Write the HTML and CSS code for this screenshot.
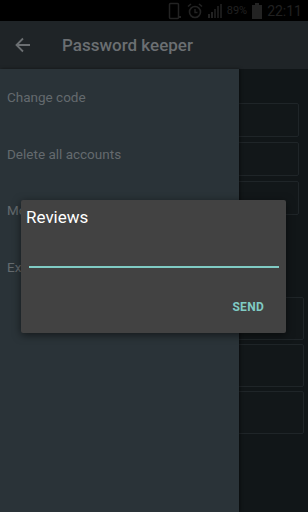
FILE: index.html
```html
<!DOCTYPE html>
<html lang="en">
  <head>
    <meta charset="UTF-8" />
    <meta name="viewport" content="width=device-width, initial-scale=1.0" />
    <title>Password keeper</title>
    <link rel="stylesheet" href="styles.css">
  </head>

  <body>
    <div class="screen">
      <div class="status-bar">
        <svg class="st-icon" width="14" height="18" viewBox="0 0 14 18">
          <rect x="1.5" y="1.5" width="9" height="15" rx="1" fill="none" stroke="#232323" stroke-width="1.5" />
          <rect x="11" y="14" width="2" height="2" fill="#232323" />
        </svg>
        <svg class="st-icon" width="16" height="16" viewBox="0 0 16 16">
          <circle cx="8" cy="9" r="5.5" fill="none" stroke="#232323" stroke-width="1.6" />
          <path d="M8 6v3.5h2.5" fill="none" stroke="#232323" stroke-width="1.4" />
          <path d="M1 3.5l3-2.5M15 3.5l-3-2.5" stroke="#232323" stroke-width="1.6" />
        </svg>
        <svg class="st-icon" width="14" height="14" viewBox="0 0 14 14">
          <rect x="0" y="10" width="2" height="4" fill="#232323" />
          <rect x="3" y="8" width="2" height="6" fill="#232323" />
          <rect x="6" y="5" width="2" height="9" fill="#1a1a1a" />
          <rect x="9" y="2" width="2" height="12" fill="#1a1a1a" />
          <rect x="12" y="0" width="2" height="14" fill="#1a1a1a" />
        </svg>
        <span class="st-text small">89%</span>
        <svg class="st-icon" width="10" height="16" viewBox="0 0 10 16">
          <rect x="3" y="0" width="4" height="2" fill="#232323" />
          <rect x="0" y="2" width="10" height="14" fill="#232323" />
        </svg>
        <span class="st-text">22:11</span>
      </div>

      <div class="toolbar">
        <svg class="back" width="16" height="16" viewBox="0 0 16 16">
          <path d="M15 8H2M8 1.5L1.5 8 8 14.5" fill="none" stroke="#6b6f72" stroke-width="1.8" />
        </svg>
        <span class="title">Password keeper</span>
      </div>

      <div class="main">
        <div class="cards top">
          <div class="card"></div>
          <div class="card"></div>
          <div class="card"></div>
        </div>
        <div class="cards bottom">
          <div class="card"></div>
          <div class="card"></div>
          <div class="card"></div>
        </div>

        <div class="drawer">
          <div class="drawer-item">Change code</div>
          <div class="drawer-item">Delete all accounts</div>
          <div class="drawer-item">More apps</div>
          <div class="drawer-item">Exit</div>
        </div>

        <div class="dialog">
          <div class="dialog-title">Reviews</div>
          <div class="dialog-input"></div>
          <div class="dialog-actions">
            <span class="send">SEND</span>
          </div>
        </div>
      </div>
    </div>
  </body>
</html>
```

FILE: styles.css
```css
body {
  margin: 0;
  background-color: #111618;
  font-family: Roboto, "Liberation Sans", sans-serif;
}

.screen {
  width: 308px;
  height: 512px;
  overflow: hidden;
  display: flex;
  flex-direction: column;
}

.status-bar {
  height: 21px;
  background-color: #000;
  display: flex;
  align-items: center;
  justify-content: flex-end;
  gap: 5px;
  padding-right: 6px;
}

.st-icon {
  flex-shrink: 0;
}

.st-text {
  color: #212121;
  font-size: 14px;
}

.st-text.small {
  font-size: 11px;
}

.toolbar {
  height: 48px;
  background-color: #1f2427;
  display: flex;
  align-items: center;
}

.back {
  margin-left: 15px;
}

.title {
  margin-left: 31px;
  color: #6b6f72;
  font-size: 17px;
  font-weight: 500;
}

.main {
  flex: 1;
  position: relative;
  background-color: #111618;
}

.cards {
  display: flex;
  flex-direction: column;
}

.cards.top {
  padding-top: 34px;
  gap: 5px;
  margin-right: 9px;
  margin-left: 8px;
}

.cards.bottom {
  padding-top: 82px;
  gap: 4px;
  margin-right: 4px;
  margin-left: 8px;
}

.card {
  height: 32px;
  border: 1px solid #1f2528;
  border-radius: 2px;
  background-color: #121719;
}

.cards.bottom .card {
  height: 41px;
}

.drawer {
  position: absolute;
  top: 0;
  left: 0;
  width: 239px;
  bottom: 0;
  background-color: #2a3338;
  box-shadow: 1px 0 3px rgba(0, 0, 0, 0.5);
  padding-top: 20px;
}

.drawer-item {
  height: 56.5px;
  padding-left: 7px;
  color: #646a6e;
  font-size: 13.5px;
}

.dialog {
  position: absolute;
  left: 21px;
  top: 131px;
  width: 265px;
  height: 133px;
  background-color: #424242;
  border-radius: 2px;
  box-shadow: 0 2px 8px rgba(0, 0, 0, 0.55);
  display: flex;
  flex-direction: column;
}

.dialog-title {
  color: #fff;
  font-size: 17px;
  padding: 7px 0 0 5px;
}

.dialog-input {
  margin: 39px 7px 0 8px;
  height: 2px;
  background-color: #80cbc4;
}

.dialog-actions {
  display: flex;
  justify-content: flex-end;
  padding: 32px 22px 0 0;
}

.send {
  color: #80cbc4;
  font-size: 12px;
  font-weight: 700;
  letter-spacing: 0.3px;
}
```
